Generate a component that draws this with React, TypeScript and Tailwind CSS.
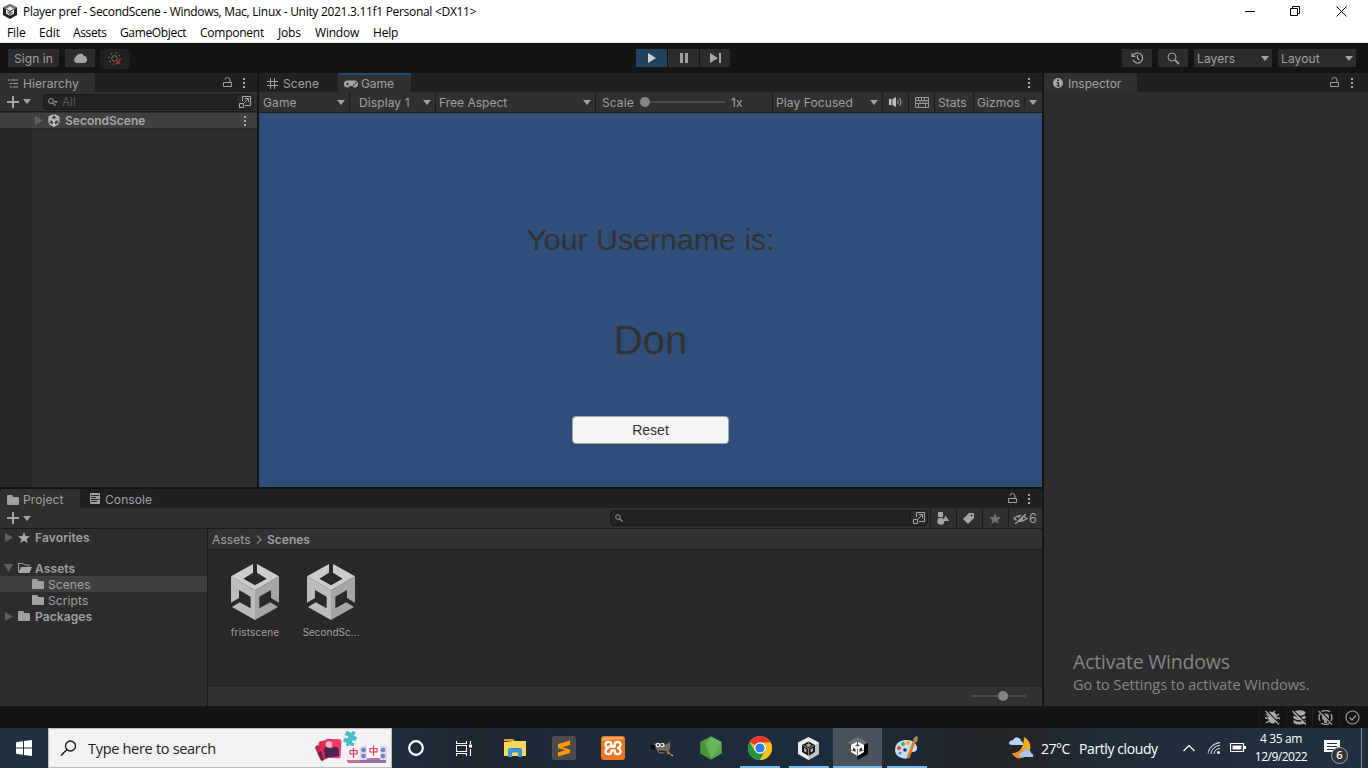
import type { ReactNode } from "react";

const FACES = {
  top: "M66 0V26L37 44L72 64L107 44L78 26V0L144 37L72 79L0 37Z",
  left: "M0 37L72 79V168L3 129L26 115L59 133V98L24 78V102L0 116Z",
  right: "M144 37L72 79V168L141 129L118 115L85 133V98L120 78V102L144 116Z",
};

function Cube({ className = "", a = "#cdcdcd", b = "#bdbdbd", c = "#a5a5a5" }) {
  return (
    <svg viewBox="0 0 144 168" className={`shrink-0 ${className}`}>
      <path d={FACES.top} fill={a} />
      <path d={FACES.left} fill={b} />
      <path d={FACES.right} fill={c} />
    </svg>
  );
}

function Icon({ w, h, children, className = "" }: { w: number; h: number; children: ReactNode; className?: string }) {
  return (
    <svg width={w} height={h} viewBox={`0 0 ${w} ${h}`} className={`shrink-0 ${className}`} fill="none">
      {children}
    </svg>
  );
}

const Down = ({ className = "" }) => (
  <Icon w={8} h={5} className={className}>
    <path d="M0 0H8L4 5Z" fill="#a2a2a2" />
  </Icon>
);

const Kebab = ({ className = "" }) => (
  <Icon w={2} h={11} className={className}>
    <path d="M0 1h2v2H0zM0 5h2v2H0zM0 9h2v2H0z" fill="#a8a8a8" />
  </Icon>
);

const Lock = ({ className = "" }) => (
  <Icon w={9} h={11} className={className}>
    <path d="M.5 5.500h8v4h-8zM2 2.500Q2 .5 4.500 .5Q7 .5 7 3v2.500" stroke="#a0a0a0" />
  </Icon>
);

const Plus = () => (
  <Icon w={12} h={12}>
    <path d="M5 0h2v5h5v2H7v5H5V7H0V5h5z" fill="#a8a8a8" />
  </Icon>
);

const Folder = ({ className = "" }) => (
  <Icon w={12} h={10} className={className}>
    <path d="M0 1Q0 0 1 0H5Q6 0 6 2H11Q12 2 12 3V9Q12 10 11 10H1Q0 10 0 9Z" fill="#a0a0a0" />
  </Icon>
);

const Star = ({ fill = "#a8a8a8", className = "" }) => (
  <Icon w={12} h={11} className={className}>
    <path d="M6 0L7.600 3.900L12 4.200L8.600 6.900L9.700 11L6 8.700L2.300 11L3.400 6.900L0 4.200L4.400 3.900Z" fill={fill} />
  </Icon>
);

const Right = ({ className = "" }) => (
  <Icon w={8} h={9} className={className}>
    <path d="M0 0L8 4.500L0 9Z" fill="#5e5e5e" />
  </Icon>
);

const Expand = ({ className = "" }) => (
  <Icon w={12} h={12} className={className}>
    <path d="M3.500 5V.5h8v9H6M.5 7.500h4v4h-4zM5 7l4-4M6 2.500h3.500V6" stroke="#a5a5a5" />
  </Icon>
);

function TitleBar() {
  return (
    <div className="flex h-[22px] items-center bg-white text-black">
      <svg width="14" height="15" viewBox="0 0 14 15" className="ml-[3px] mt-[1px] shrink-0">
        <path d="M7 0L14 3.500V11L7 15L0 11V3.500Z" fill="#222" />
        <path d="M7 0L14 3.500L7 8L0 3.500Z" fill="#777" />
        <path d="M7 2.500L11 5V9.500L7 12L3 9.500V5Z" fill="#eee" />
        <path d="M7 7.500V12M3.500 5.300L7 7.500L10.500 5.300" stroke="#222" strokeWidth="1" fill="none" />
        <path d="M4.500 7.500v1.500l1.300.8V8.200zM9.500 7.500v1.500l-1.300.8V8.200z" fill="#333" />
      </svg>
      <span className="ml-[6px] mt-[2px] w-[460px] whitespace-nowrap text-[12px] tracking-[-0.3px]">
        Player pref - SecondScene - Windows, Mac, Linux - Unity 2021.3.11f1 Personal &lt;DX11&gt;
      </span>
      <Icon w={10} h={10} className="ml-auto mr-[35px]">
        <path d="M0 5.500h10" stroke="#000" />
      </Icon>
      <Icon w={10} h={10} className="mr-[36px]">
        <path d="M.5 2.500h7v7h-7zM2.500 2.500V.5h7v7H7.500" stroke="#000" />
      </Icon>
      <Icon w={11} h={11} className="mr-[21px]">
        <path d="M.5.5l10 10M10.500.5l-10 10" stroke="#000" />
      </Icon>
    </div>
  );
}

function MenuBar() {
  return (
    <div className="flex h-[21px] items-center whitespace-nowrap border-b border-[#e8e8e8] bg-white pl-[7px] pt-[2px] text-[12px] text-black">
      <span className="w-[32px] tracking-[-0.1px]">File</span>
      <span className="w-[34px] tracking-[-0.1px]">Edit</span>
      <span className="w-[47px] tracking-[-0.35px]">Assets</span>
      <span className="w-[80px] tracking-[-0.35px]">GameObject</span>
      <span className="w-[78px] tracking-[-0.25px]">Component</span>
      <span className="w-[37px] tracking-[-0.2px]">Jobs</span>
      <span className="w-[58px] tracking-[-0.2px]">Window</span>
      <span className="tracking-[-0.2px]">Help</span>
    </div>
  );
}

function Toolbar() {
  return (
    <div className="flex h-[30px] items-start bg-[#141414] pt-[6px]">
      <div className="ml-2 flex h-[18px] w-[51px] items-center justify-center bg-[#2c2c2c] pt-px">Sign in</div>
      <div className="ml-[6px] flex h-[18px] w-[30px] items-center justify-center bg-[#2c2c2c]">
        <Icon w={15} h={10}>
          <path d="M3.500 10A3.300 3.300 0 0 1 3 3.800A4.300 4.300 0 0 1 11 3A3.600 3.600 0 0 1 11.500 10Z" fill="#a3a3a3" />
        </Icon>
      </div>
      <div className="ml-[5px] flex h-[20px] w-[30px] items-center justify-center rounded-[3px] bg-[#202020]">
        <Icon w={14} h={14}>
          <circle cx="6.500" cy="6.500" r="2.800" stroke="#777" />
          <circle cx="6.500" cy="6.500" r="5.500" stroke="#686868" strokeWidth="1.500" strokeDasharray="1.400 2.900" />
          <path d="M8 8l4 4M12 8l-4 4" stroke="#a43333" strokeWidth="1.500" />
        </Icon>
      </div>
      <div className="ml-[506px] flex gap-px">
        <div className="flex h-[18px] w-[31px] items-center justify-center bg-[#224261]">
          <Icon w={8} h={10}><path d="M0 0L8 5L0 10Z" fill="#cecece" /></Icon>
        </div>
        <div className="flex h-[18px] w-[31px] items-center justify-center bg-[#2c2c2c]">
          <Icon w={8} h={10}><path d="M0 0h3v10H0zM5 0h3v10H5z" fill="#9c9c9c" /></Icon>
        </div>
        <div className="flex h-[18px] w-[30px] items-center justify-center bg-[#2c2c2c]">
          <Icon w={11} h={10}><path d="M0 0L8 5L0 10ZM9 0h2v10H9z" fill="#a5a5a5" /></Icon>
        </div>
      </div>
      <div className="ml-auto mr-[12px] flex">
        <div className="mr-[6px] flex h-[18px] w-[30px] items-center justify-center bg-[#2c2c2c]">
          <Icon w={13} h={12}>
            <path d="M2 4A5 5 0 1 1 2 8M1 1v3.500h3.500M6.500 3v3.500l2 1.500" stroke="#a8a8a8" strokeWidth="1.200" />
          </Icon>
        </div>
        <div className="mr-[6px] flex h-[18px] w-[30px] items-center justify-center bg-[#2c2c2c]">
          <Icon w={13} h={13}>
            <circle cx="5" cy="5" r="4" stroke="#a2a2a2" />
            <path d="M8 8l4 4" stroke="#a2a2a2" strokeWidth="1.800" />
          </Icon>
        </div>
        <div className="mr-[6px] flex h-[18px] w-[78px] items-center justify-between bg-[#2c2c2c] px-[3px]">
          <span className="pt-px">Layers</span><Down />
        </div>
        <div className="flex h-[18px] w-[78px] items-center justify-between bg-[#2c2c2c] px-[3px]">
          <span className="pt-px">Layout</span><Down />
        </div>
      </div>
    </div>
  );
}

function Hierarchy() {
  return (
    <div className="flex w-[257px] flex-col bg-[#2d2d2d]">
      <div className="flex h-[19px] items-center rounded-t-[3px] bg-[#202020]">
        <div className="flex h-[19px] w-[95px] items-center rounded-t-[3px] bg-[#303030] pl-2 pt-[2px]">
          <Icon w={10} h={9}>
            <path d="M0 1h2M3 1h7M2 4.500h2M5 4.500h5M2 8h2M5 8h5" stroke="#a0a0a0" />
          </Icon>
          <span className="ml-[5px]">Hierarchy</span>
        </div>
        <Lock className="ml-[128px]" />
        <Kebab className="ml-[11px]" />
      </div>
      <div className="flex h-[20px] items-center border-b border-[#1c1c1c] bg-[#303030] pl-[7px]">
        <Plus />
        <Down className="ml-1" />
        <div className="ml-[12px] flex h-[16px] w-[211px] items-center rounded-[4px] border border-[#191919] bg-[#222] pl-1">
          <Icon w={10} h={8}>
            <circle cx="3" cy="3" r="2.400" stroke="#999" />
            <path d="M4.800 4.800l2.700 2.700" stroke="#999" strokeWidth="1.200" />
            <path d="M6 3h4L8 5.300z" fill="#999" />
          </Icon>
          <span className="ml-[4px] pt-px text-[11.500px] text-[#585858]">All</span>
          <div className="ml-auto flex h-[14px] w-[17px] items-center justify-center rounded-r-[3px] border-l border-[#191919] bg-[#2c2c2c]">
            <Expand />
          </div>
        </div>
      </div>
      <div className="flex grow flex-col bg-[linear-gradient(90deg,#272727_32px,#2d2d2d_32px)]">
        <div className="mt-px flex h-[16px] items-center border-b border-[#272727] bg-[#404040]">
          <Right className="ml-[35px]" />
          <Cube className="ml-[5px] h-[13px] w-[12px]" a="#c8c8c8" b="#c0c0c0" c="#b4b4b4" />
          <span className="ml-[5px] w-[170px] pt-px font-semibold tracking-normal text-[#a8a8a8]">SecondScene</span>
          <Kebab className="ml-[9px]" />
        </div>
      </div>
    </div>
  );
}

function GameView() {
  return (
    <div className="flex w-[783px] flex-col">
      <div className="flex h-[19px] rounded-t-[3px] bg-[#202020]">
        <div className="flex w-[79px] items-center pl-2 pt-[2px]">
          <Icon w={11} h={11} className="-mt-px">
            <path d="M3.500 0v11M7.500 0v11M0 3.500h11M0 7.500h11" stroke="#a0a0a0" />
          </Icon>
          <span className="ml-[5px]">Scene</span>
        </div>
        <div className="flex w-[73px] items-center rounded-t-[2px] border-t-2 border-[#264a6e] bg-[#303030] pl-[6px]">
          <Icon w={14} h={8}>
            <path d="M3.500.5h7a3.500 3.500 0 0 1 0 7Q9 7.500 8.300 6H5.700Q5 7.500 3.500 7.500a3.500 3.500 0 0 1 0-7z" fill="#a5a5a5" />
            <path d="M2 4h3M3.500 2.500v3" stroke="#303030" />
            <path d="M9 5h1.500M11 3h1.500" stroke="#303030" strokeWidth="1.300" />
          </Icon>
          <span className="ml-[3px] tracking-[-0.1px]">Game</span>
        </div>
        <Kebab className="ml-auto mr-[12px] mt-[4px]" />
      </div>
      <div className="flex h-[21px] items-stretch border-b border-[#1c1c1c] bg-[#303030] [&>div]:flex [&>div]:items-center [&_span]:pt-px">
        <div className="w-[91px] border-r border-[#1c1c1c] pl-1"><span className="w-[74px]">Game</span><Down /></div>
        <div className="w-[86px] border-r border-[#1c1c1c] pl-[9px]"><span className="w-[64px]">Display 1</span><Down /></div>
        <div className="w-[160px] border-r border-[#1c1c1c] pl-[3px]"><span className="w-[144px] tracking-normal">Free Aspect</span><Down /></div>
        <div className="w-[177px] border-r border-[#1c1c1c] pl-[6px]">
          <span className="w-[38px]">Scale</span>
          <i className="h-[10px] w-[10px] rounded-full bg-[#858585]" />
          <i className="h-[2px] w-[75px] bg-[#4b4b4b]" />
          <span className="ml-[6px]">1x</span>
        </div>
        <div className="w-[110px] border-r border-[#1c1c1c] pl-[3px]"><span className="w-[94px]">Play Focused</span><Down /></div>
        <div className="w-[26px] border-r border-[#1c1c1c] pl-[6px]">
          <Icon w={13} h={10}>
            <path d="M0 2h2.500v6H0zM3.500 2L7 0v10L3.500 8z" fill="#c0c0c0" />
            <path d="M8.500 3Q10 5 8.500 7M10.500 1Q13.500 5 10.500 9" stroke="#a8a8a8" />
          </Icon>
        </div>
        <div className="w-[26px] justify-center border-r border-[#1c1c1c]">
          <Icon w={14} h={11}>
            <path d="M.5.5h13v10H.5zM0 3.500h14M0 6.500h14M3.500 0v3.500M6.500 0v3.500M9.500 0v3.500M5 3.500v3M8 3.500v3M11 3.500v3M3.500 6.500v4M10.500 6.500v4" stroke="#989898" />
          </Icon>
        </div>
        <div className="w-[39px] border-r border-[#1c1c1c] pl-[3px]"><span className="tracking-normal">Stats</span></div>
        <div className="grow pl-[3px]"><span className="w-[47px]">Gizmos</span><i className="mr-[4px] h-[13px] w-px bg-[#222]" /><Down /></div>
      </div>
      <div className="flex grow flex-col items-center bg-[#304e7a] font-['Liberation_Sans',sans-serif] tracking-normal text-[#323232]">
        <span className="mt-[107px] text-[30.300px] leading-[40px]">Your Username is:</span>
        <span className="mt-[54px] text-[40px] leading-[52px]">Don</span>
        <button className="mt-[50px] flex h-[28px] w-[157px] items-center justify-center rounded-[4px] border border-[#a5a5a5] bg-[#f5f5f5] text-[14px]">Reset</button>
      </div>
    </div>
  );
}

function TreeRow({ children, className = "" }: { children: ReactNode; className?: string }) {
  return <div className={`flex h-4 items-center [&>span]:pt-px ${className}`}>{children}</div>;
}

function Project() {
  return (
    <div className="flex h-[217px] w-[1042px] flex-col">
      <div className="flex h-[19px] items-center rounded-t-[3px] bg-[#202020]">
        <div className="flex h-[19px] w-[80px] items-center rounded-t-[3px] bg-[#303030] pl-[7px] pt-[2px]">
          <Folder />
          <span className="ml-[4px] pt-px">Project</span>
        </div>
        <Icon w={10} h={11} className="ml-[10px]">
          <rect width="10" height="11" rx="1" fill="#a0a0a0" />
          <path d="M1 2.500h8M1 4.500h5M1 6.500h8M1 8.500h6" stroke="#282828" />
        </Icon>
        <span className="ml-[5px] mt-[3px]">Console</span>
        <Lock className="ml-auto" />
        <Kebab className="ml-[11px] mr-[12px]" />
      </div>
      <div className="flex h-[21px] items-stretch border-b border-[#1c1c1c] bg-[#303030] pl-[7px]">
        <div className="flex items-center"><Plus /><Down className="ml-1" /></div>
        <div className="ml-[579px] mt-[2px] flex h-[16px] w-[318px] items-center rounded-[4px] border border-[#181818] bg-[#222] pl-1">
          <Icon w={8} h={8}>
            <circle cx="3" cy="3" r="2.300" stroke="#999" />
            <path d="M4.800 4.800l2.700 2.700" stroke="#999" strokeWidth="1.200" />
          </Icon>
          <div className="ml-auto flex h-[14px] w-[17px] items-center justify-center rounded-r-[3px] border-l border-[#191919] bg-[#2c2c2c]"><Expand /></div>
        </div>
        <div className="ml-[2px] flex w-[26px] items-center justify-center border-l border-[#1c1c1c] pr-[2px]">
          <Icon w={12} h={13}>
            <path d="M1 0h5v5H1zM8.500 3.500L12 9H6z" fill="#a5a5a5" />
            <circle cx="3.800" cy="9.200" r="3.500" fill="#a5a5a5" />
          </Icon>
        </div>
        <div className="flex w-[26px] items-center justify-center border-l border-[#1c1c1c] pr-[2px]">
          <Icon w={11} h={11}>
            <path d="M6 0H10Q11 0 11 1V5L5 11L0 6Z" fill="#a5a5a5" /><circle cx="8.500" cy="2.500" r="1" fill="#303030" />
          </Icon>
        </div>
        <div className="flex w-[26px] items-center justify-center border-l border-[#1c1c1c] pr-[2px]"><Star fill="#707070" /></div>
        <div className="flex grow items-center border-l border-[#1c1c1c] pl-[4px]">
          <Icon w={15} h={11}>
            <path d="M1 5.500Q7 0 14 5.500Q7 11 1 5.500Z" stroke="#a0a0a0" strokeWidth="1.300" />
            <circle cx="7.500" cy="5.500" r="2.500" fill="#a0a0a0" />
            <path d="M1.500 9.800L12 .2" stroke="#303030" strokeWidth="1.500" /><path d="M2 11L13 1" stroke="#a0a0a0" strokeWidth="1.300" />
          </Icon>
          <span className="ml-px pt-px text-[12.500px]">6</span>
        </div>
      </div>
      <div className="flex grow">
        <div className="flex w-[208px] flex-col border-r border-[#191919] bg-[#2d2d2d]">
          <TreeRow className="font-semibold"><Right className="ml-[5px]" /><Star className="ml-[5px]" /><span className="ml-[5px] tracking-[0.15px]">Favorites</span></TreeRow>
          <TreeRow className="mt-[15px] font-semibold">
            <Icon w={9} h={8} className="ml-[4px]"><path d="M0 0h9L4.500 8z" fill="#5e5e5e" /></Icon>
            <Icon w={14} h={10} className="ml-[5px]">
              <path d="M.5 9V.5H5L6.500 2H11V4" stroke="#a0a0a0" /><path d="M3 4H14L11.500 10H.5Z" fill="#a8a8a8" />
            </Icon>
            <span className="ml-[3px]">Assets</span>
          </TreeRow>
          <TreeRow className="bg-[#404040]"><Folder className="ml-[32px]" /><span className="ml-[4px]">Scenes</span></TreeRow>
          <TreeRow><Folder className="ml-[32px]" /><span className="ml-[4px]">Scripts</span></TreeRow>
          <TreeRow className="font-semibold"><Right className="ml-[5px]" /><Folder className="ml-[5px]" /><span className="ml-[5px]">Packages</span></TreeRow>
        </div>
        <div className="flex grow flex-col bg-[#292929]">
          <div className="flex h-[21px] items-center border-b border-[#1e1e1e] bg-[#323232] pl-1">
            <span className="w-[44px] pt-px">Assets</span>
            <Icon w={6} h={9}><path d="M1 .5L5 4.500L1 8.500" stroke="#808080" strokeWidth="1.300" /></Icon>
            <span className="ml-[5px] pt-px font-semibold tracking-normal">Scenes</span>
          </div>
          <div className="flex grow gap-[28px] pl-[23px] pt-[14px] text-[10px]">
            <div className="flex w-[48px] flex-col items-center"><Cube className="h-[56px] w-[48px]" /><span className="mt-[4px] whitespace-nowrap tracking-[0.15px]">fristscene</span></div>
            <div className="flex w-[48px] flex-col items-center"><Cube className="h-[56px] w-[48px]" /><span className="mt-[4px] whitespace-nowrap tracking-[0px]">SecondSc...</span></div>
          </div>
          <div className="flex h-[21px] items-center border-t border-[#1e1e1e] bg-[#323232]">
            <i className="ml-auto h-[2px] w-[27px] bg-[#4b4b4b]" />
            <i className="h-[10px] w-[10px] rounded-full bg-[#858585]" />
            <i className="mr-[16px] h-[2px] w-[18px] bg-[#4b4b4b]" />
          </div>
        </div>
      </div>
    </div>
  );
}

function Inspector() {
  return (
    <div className="relative grow bg-[#2d2d2d]">
      <div className="flex h-[19px] items-center rounded-t-[3px] bg-[#202020]">
        <div className="flex h-[19px] w-[93px] items-center rounded-t-[3px] bg-[#303030] pl-[9px] pt-[2px]">
          <Icon w={10} h={10} className="-mt-px">
            <circle cx="5" cy="5" r="5" fill="#a8a8a8" />
            <path d="M4 1.500h2V3H4zM3.500 4H6v3.500h1V8.500H3.500v-1H4.500V5H3.500z" fill="#282828" />
          </Icon>
          <span className="ml-[5px] tracking-normal">Inspector</span>
        </div>
        <Lock className="ml-auto" />
        <Kebab className="ml-[12px] mr-[15px]" />
      </div>
      <div className="absolute left-[29px] top-[575px] whitespace-nowrap font-['Open_Sans',sans-serif] tracking-normal text-[#858585]">
        <p className="text-[19.500px] leading-[28px] tracking-[-0.2px]">Activate Windows</p>
        <p className="text-[14.500px] leading-[18px] tracking-[-0.03px]">Go to Settings to activate Windows.</p>
      </div>
    </div>
  );
}

function Slash({ color }: { color: string }) {
  return (
    <>
      <path d="M1.500 .5l13 13" stroke="#141414" strokeWidth="1.200" />
      <path d="M.5 1l13.500 13.500" stroke={color} strokeWidth="1.200" />
    </>
  );
}

function StatusBar() {
  return (
    <div className="flex h-[22px] items-center justify-end bg-[#141414] pr-[3px] [&>div]:flex [&>div]:h-[20px] [&>div]:w-[26.500px] [&>div]:items-center [&>div]:justify-center [&>div]:border-l [&>div]:border-[#202020]">
      <div><Icon w={15} h={15}><ellipse cx="7.500" cy="8" rx="4.200" ry="5.500" fill="#aaa" /><path d="M4.500 2l6 2M10 1L8 3M1 4l3 2M0 8h4M1 13l3-2M14 4l-3 2M15 8h-4M14 13l-3-2" stroke="#aaa" strokeWidth="1.500" /><Slash color="#aaa" /></Icon></div>
      <div><Icon w={15} h={15}><ellipse cx="7.500" cy="3" rx="6" ry="2.700" fill="#aaa" /><path d="M1.500 5.500Q7.500 9 13.500 5.500V8.500Q7.500 12 1.500 8.500zM1.500 10Q7.500 13.500 13.500 10V13Q7.500 16 1.500 13z" fill="#aaa" /><Slash color="#aaa" /></Icon></div>
      <div><Icon w={15} h={15}><circle cx="7.500" cy="7" r="3.600" fill="#999" /><path d="M6 9h3v4H6z" fill="#999" /><path d="M3 2Q7.500-1 12 2M13 4Q15 8 12.500 11.500M12 13Q7.500 16 3 13M2 11Q0 7 2 4" stroke="#999" strokeWidth="1.500" /><Slash color="#999" /></Icon></div>
      <div><Icon w={15} h={15}><circle cx="7.500" cy="7.500" r="6.500" stroke="#9a9a9a" strokeWidth="1.200" /><path d="M4.500 7.500L7 10L11 5.500" stroke="#9a9a9a" strokeWidth="1.300" /></Icon></div>
    </div>
  );
}

function TaskButton({ children, state = "" }: { children: ReactNode; state?: "" | "open" | "active" }) {
  return (
    <div className={`flex h-[40px] w-[49px] shrink-0 flex-col items-center ${state === "active" ? "bg-[#48535e]" : ""}`}>
      <div className="flex h-[38px] items-center pt-[2px]">{children}</div>
      {state !== "" && <i className={`h-[2px] bg-[#76b9ed] ${state === "active" ? "w-full" : "w-[40px]"}`} />}
    </div>
  );
}

function SearchArt() {
  return (
    <svg width="74" height="38" viewBox="0 0 74 38" className="shrink-0">
      <g transform="translate(0 2)">
        <rect x="3" y="12" width="13" height="16" rx="2" fill="#c22a49" transform="rotate(-24 10 20)" />
        <rect x="6" y="9" width="14" height="18" rx="2" fill="#e02a55" transform="rotate(-12 13 18)" />
        <rect x="11" y="8" width="16" height="19" rx="2" fill="#f13b6c" transform="rotate(3 19 18)" />
        <path d="M10 20Q10 15 14 15L17 18L20 16Q24 15 25 19V25L11 27Z" fill="#4b2550" />
        <path d="M4 22l3-2 3 9-2 1z" fill="#5b2348" />
        <circle cx="15" cy="13.500" r="3.200" fill="#ffb7c9" />
      </g>
      <path d="M31 3l5 1 1-2q3-1 3 2l-1 2 4 1-1 4q-4-1-3 1t3 1l-1 4-4-1q0 3-2 2t-1-3l-4-1 1-4q3 1 3-1t-4-1z" fill="#4bbdc7" transform="rotate(14 37 9)" />
      <g>
        <path d="M34 31H72V34H34Z" fill="#8d70ae" />
        <rect x="33" y="17" width="13" height="15" rx="2" fill="#fbeef3" /><rect x="46" y="17" width="9" height="14" rx="1" fill="#dbd5ea" />
        <rect x="53" y="15" width="13" height="15" rx="2" fill="#fff" /><rect x="66" y="17" width="7" height="14" rx="1" fill="#dcd7ee" />
        <path d="M33 31h13v2H33zM53 29h13v2H53z" fill="#c87292" />
        <path d="M36 21.500h7v3.500h-7zM39.500 19v10M56 19.500h7v3.500h-7zM59.500 16.500v10.500" stroke="#e8345f" strokeWidth="1.200" fill="none" />
        <g fill="#7380c6"><circle cx="49.500" cy="21" r="2.300" /><circle cx="49.500" cy="27" r="2.300" /><circle cx="69" cy="21" r="2.300" /><circle cx="69" cy="27" r="2.300" /></g>
      </g>
    </svg>
  );
}

function Taskbar() {
  return (
    <div className="flex h-[40px] items-center bg-[linear-gradient(90deg,#203040_0px,#1f2e3d_400px,#1e262f_480px,#1c2a38_560px,#1f2e3e_850px,#20252c_950px,#232527_1010px,#202c38_1100px,#213142_1368px)] font-['Open_Sans',sans-serif] text-white">
      <div className="flex w-[48px] justify-center">
        <Icon w={16} h={16}><path d="M0 2.200L7 1.200V7.500H0zM8 1L16 0V7.500H8zM0 8.500H7V14.800L0 13.800zM8 8.500H16V16L8 15z" fill="#fff" /></Icon>
      </div>
      <div className="flex h-[40px] w-[344px] items-center border border-[#bdbdbd] bg-[#f2f2f2]">
        <Icon w={17} h={17} className="ml-[11px]"><circle cx="10.500" cy="6" r="5" stroke="#161616" strokeWidth="1.300" /><path d="M7 9.500L1 15.500" stroke="#161616" strokeWidth="1.500" /></Icon>
        <span className="ml-[11px] mt-px w-[226px] text-[14.500px] tracking-[-0.3px] text-[#222]">Type here to search</span>
        <SearchArt />
      </div>
      <div className="flex w-[48px] justify-center">
        <Icon w={16} h={16}><circle cx="8" cy="8" r="6.800" stroke="#fff" strokeWidth="2.200" /></Icon>
      </div>
      <div className="flex w-[50px] pl-[16px]">
        <Icon w={17} h={15}><path d="M.5 0v2.500h10V0M.5 15v-2.500h10V15M.5 4.500h10v6H.5zM14.500 0v3M14.500 8v7" stroke="#fff" strokeWidth="1.100" /><path d="M13 3.500h3v3h-3z" fill="#fff" /></Icon>
      </div>
      <TaskButton>
        <Icon w={22} h={19}><path d="M0 1Q0 0 1 0H9L11 2H0z" fill="#e5a50f" /><path d="M0 3L10 2H22V17H0z" fill="#ffd75e" /><path d="M4 18V11Q4 9 6 9H16Q18 9 18 11V18H14V13.500H8V18Z" fill="#3996dc" /></Icon>
      </TaskButton>
      <TaskButton>
        <Icon w={24} h={24}><rect width="24" height="24" rx="2" fill="#4b4b4b" /><path d="M18 4.500V9L10.500 11.300L18 13.500V17L6 20.500V16.500L13 14.200L6 12V8Z" fill="#ff9800" /></Icon>
      </TaskButton>
      <TaskButton>
        <Icon w={24} h={24}>
          <rect width="24" height="24" rx="3" fill="#ee7623" /><path d="M1 3Q1 1 3 1H21Q23 1 23 3L1 5z" fill="#f5a15f" />
          <path d="M10.300 9V7.500Q10 5.800 7.500 5.800Q4.500 5.800 4.500 8.500Q4.500 11 7 12Q4.500 13 4.500 15.500Q4.500 18.200 7.500 18.200Q10.300 18 10.300 15.500V14.500H13.700V15.500Q13.700 18.200 16.500 18.200Q19.500 18.200 19.500 15.500Q19.500 13 17 12Q19.500 11 19.500 8.500Q19.500 5.800 16.500 5.800Q13.700 6 13.700 8.500V10.500H8.500" stroke="#fff" strokeWidth="2.300" strokeLinejoin="round" strokeLinecap="round" />
        </Icon>
      </TaskButton>
      <TaskButton>
        <Icon w={24} h={24}><path d="M2 10Q5 6 9 7L13 9Q17 9 20 5Q21 10 19 16L23 19L21 20L17 16Q11 19 8 16L6 12Q2 14 2 10Z" fill="#756e60" /><circle cx="3" cy="11" r="2.500" fill="#111" /><circle cx="8" cy="9" r="2.300" fill="#eee" /><circle cx="12.500" cy="9" r="2.200" fill="#ddd" /><circle cx="8" cy="9" r="1" fill="#222" /><circle cx="12" cy="9" r="1" fill="#222" /><path d="M9 15L16 16L23 20" stroke="#24211e" strokeWidth="1.500" /><path d="M17 16.500l3 1.500" stroke="#dd8632" strokeWidth="1.500" /><path d="M21 18.500l2 1.500" stroke="#bbb" strokeWidth="1.300" /></Icon>
      </TaskButton>
      <TaskButton>
        <Icon w={22} h={24}><path d="M11 .5L21.500 6V17.500L11 23.500L.5 17.500V6Z" fill="#57a84a" /><path d="M11 .5L21.500 6L12 22L6 8z" fill="#6bb35c" /><path d="M11 .5L.5 6L4 9z" fill="#4a9d3e" /><path d="M.5 6L5 9L11 23.500L.5 17.500z" fill="#469639" /><path d="M21.500 6V17.500L11 23.500z" fill="#5ca64e" /></Icon>
      </TaskButton>
      <TaskButton state="open">
        <Icon w={24} h={24}>
          <circle cx="12" cy="12" r="12" fill="#fbc116" />
          <path d="M12 12L1.600 6A12 12 0 0 1 22.400 6Z" fill="#e33b2e" />
          <path d="M1.600 6A12 12 0 0 0 12 24L17.200 15L12 12L6.800 15Z" fill="#229342" />
          <path d="M12 6.500H22.700A12 12 0 0 1 12 24L17 15z" fill="#fbc116" />
          <circle cx="12" cy="12" r="5.800" fill="#fff" /><circle cx="12" cy="12" r="4.600" fill="#2f7de8" />
        </Icon>
      </TaskButton>
      <TaskButton state="open">
        <Icon w={21} h={23}>
          <path d="M10.500 0L21 5.500V17L10.500 23L0 17V5.500Z" fill="#ececec" /><path d="M17 8L21 5.500V17L10.500 23V19z" fill="#c3c3c3" />
          <path d="M10.500 4.500L17 8V15L10.500 19L4 15V8Z" fill="#1c1c1c" />
          <path d="M10.500 6.500L13.500 8.200L10.500 10L7.500 8.200z" fill="#aaa" /><path d="M10.500 4v3M10.500 11.500V19M5 8.500l5.500 3l5.500-3" stroke="#8c8c8c" />
          <path d="M6 11l2.500 1.500v3L6 14zM15 11l-2.500 1.500v3L15 14z" fill="#b5b5b5" />
        </Icon>
      </TaskButton>
      <TaskButton state="active">
        <Icon w={21} h={23}>
          <path d="M10.500 0L21 5.500V17L10.500 23L0 17V5.500Z" fill="#4e4e4e" /><path d="M10.500 11.500L21 5.500V17L10.500 23z" fill="#080808" /><path d="M10.500 0L21 5.500L10.500 11L0 5.500z" fill="#717171" />
          <path d="M10.500 4.500L17 8V15L10.500 19L4 15V8Z" fill="#fff" />
          <path d="M10.500 7L13 8.300L10.500 9.700L8 8.300z" fill="#555" /><path d="M10.500 4v3" stroke="#555" /><path d="M4 13l3 1M17 13l-3 1M10.500 11.500V19" stroke="#777" />
          <path d="M6 10.500l2.500 1.500v3L6 13.500zM15 10.500l-2.500 1.500v3L15 13.500z" fill="#333" />
        </Icon>
      </TaskButton>
      <TaskButton state="open">
        <Icon w={26} h={24}><path d="M1 14Q1 5 11 4Q21 3 23 11Q24 16 18 16Q14 16 15 20Q14 24 8 22Q1 20 1 14Z" fill="#c3dff0" /><circle cx="5" cy="12" r="2" fill="#db4c40" /><circle cx="9" cy="8" r="2" fill="#55ae45" /><circle cx="14" cy="7" r="2" fill="#f0ab27" /><circle cx="11" cy="14" r="1.800" fill="#263445" /><circle cx="6" cy="17" r="1.500" fill="#4f86d8" /><path d="M20 6L14 22" stroke="#d67f2c" strokeWidth="3" /><path d="M19 3l3-3 2 1-1 5-3 1z" fill="#b18059" /></Icon>
      </TaskButton>
      <Icon w={26} h={24} className="ml-[78px]">
        <path d="M15 1A11 11 0 0 1 11 22Q5 22 3 17Q15 17 15 1Z" fill="#f7a928" /><path d="M3 17Q10 18 13 12L17 20Q8 26 3 17Z" fill="#ef8a24" />
        <path d="M3 9Q0 9 0 6.500Q1 4 4 4Q6 0 10 2Q12 3 12 5Q15 6 14 9Z" fill="#b8d2f8" />
        <path d="M13 21Q10 21 10 18.500Q11 16 14 16Q16 12 20 14Q22 15 22 17Q25 18 24 21Z" fill="#a9c5f1" />
      </Icon>
      <span className="ml-[6px] w-[38px] whitespace-nowrap text-[14px] tracking-[-0.5px]">27°C</span>
      <span className="w-[104px] whitespace-nowrap text-[14px] tracking-[-0.4px]">Partly cloudy</span>
      <Icon w={12} h={8}><path d="M.5 7L6 1.500L11.500 7" stroke="#fff" strokeWidth="1.200" /></Icon>
      <Icon w={14} h={14} className="ml-[12px]">
        <path d="M1 13A12 12 0 0 1 13 1.500" stroke="#8d989f" /><path d="M4 13A9 9 0 0 1 13 4.500M7 13A6 6 0 0 1 13 7.500M1.500 10.500Q4 3.500 13 1.500" stroke="#dfe4e7" /><circle cx="11.500" cy="11.500" r="1.500" fill="#fff" />
      </Icon>
      <Icon w={16} h={10} className="ml-[9px]"><path d="M.5.5h13v8H.5z" stroke="#fff" strokeWidth="1.200" /><path d="M2.500 2.500h9v4h-9zM14 3h2v3h-2z" fill="#fff" /></Icon>
      <div className="ml-[6px] flex w-[58px] flex-col items-center whitespace-nowrap text-[12px] leading-[18px] tracking-[-0.35px]">
        <span>4 35 am</span><span className="tracking-[-0.5px]">12/9/2022</span>
      </div>
      <div className="relative ml-[14px] h-[26px] w-[26px]">
        <Icon w={17} h={16} className="mt-[5px]"><path d="M0 0h16v12H11l-3 3v-3H0z" fill="#fff" /><path d="M3 3.500h10M3 6.500h10M3 9.500h7" stroke="#24313c" /></Icon>
        <span className="absolute left-[7px] top-[12px] flex h-[17px] w-[17px] items-center justify-center rounded-full border border-[#a0a0a0] bg-[#333638] text-[11px] font-semibold">6</span>
      </div>
      <i className="ml-auto mr-[6px] h-[40px] w-px bg-[#87919a]" />
    </div>
  );
}

export default function App() {
  return (
    <div className="flex h-[768px] w-[1368px] flex-col overflow-hidden bg-[#141414] font-['Open_Sans',sans-serif]">
      <TitleBar />
      <MenuBar />
      <div className="flex flex-col whitespace-nowrap font-['Inter',sans-serif] text-[12px] leading-4 tracking-[0.1px] text-[#a0a0a0]">
        <Toolbar />
        <div className="flex h-[633px] gap-[2px]">
          <div className="flex w-[1042px] flex-col gap-[2px]">
            <div className="flex h-[414px] gap-[2px]">
              <Hierarchy />
              <GameView />
            </div>
            <Project />
          </div>
          <Inspector />
        </div>
        <StatusBar />
      </div>
      <Taskbar />
    </div>
  );
}
